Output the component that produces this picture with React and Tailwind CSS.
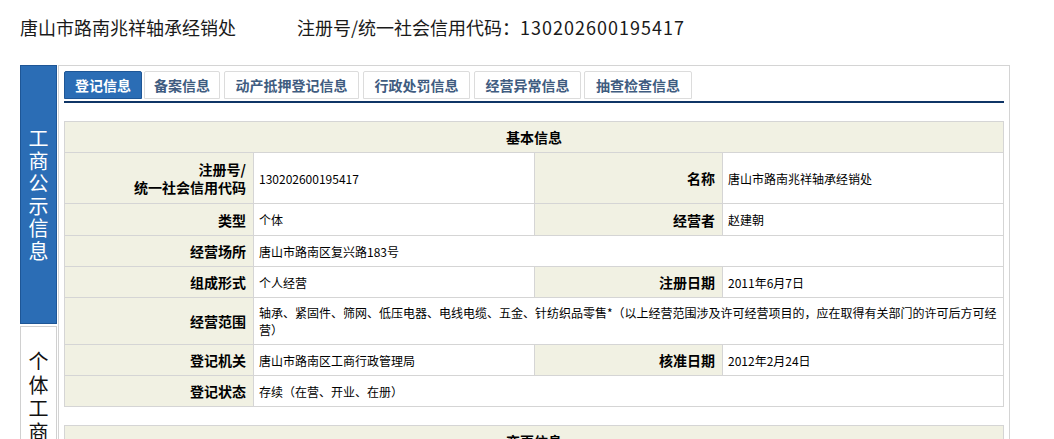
import React from 'react';

const FONT = { fontFamily: '"Noto Sans CJK SC", "Noto Sans", sans-serif' };

// largeur et marge de chaque onglet, relevées sur la capture
const tabs = [
    { label: '登记信息', cls: 'w-[78px]' },
    { label: '备案信息', cls: 'ml-[2px] w-[76px]' },
    { label: '动产抵押登记信息', cls: 'ml-[4px] w-[135px]' },
    { label: '行政处罚信息', cls: 'ml-[4px] w-[107px]' },
    { label: '经营异常信息', cls: 'ml-[4px] w-[107px]' },
    { label: '抽查检查信息', cls: 'ml-[3px] w-[108px]' },
];

function Label({ children }) {
    return (
        <td className="border border-[#d5d5d5] bg-[#f1f1e3] text-right pr-[7px] text-[14px] font-bold text-black leading-[18px]">
            {children}
        </td>
    );
}

function Value({ children, colSpan }) {
    return (
        <td colSpan={colSpan} className="border border-[#d5d5d5] bg-white pl-[5px] pr-[4px] text-[12px] text-black leading-[17px]">
            {children}
        </td>
    );
}

export default function App() {
    return (
        <div className="bg-white min-h-screen text-black" style={FONT}>
            {/* Header */}
            <div className="h-[54px] flex items-center pl-[20px] text-[18px] text-[#1a1a1a]">
                <span>唐山市路南兆祥轴承经销处</span>
                <span className="ml-[61px]">
                    注册号/统一社会信用代码：<span className="tracking-[1px]">130202600195417</span>
                </span>
            </div>

            <div className="flex mt-[11px] pl-[20px]">
                {/* Left sidebar */}
                <div className="w-[37px] flex flex-col shrink-0">
                    <div className="h-[259px] bg-[#2b6db5] border border-[#1e5696] flex items-center justify-center">
                        <div className="w-[20px] text-white text-[20px] leading-[22.5px] text-center">工商公示信息</div>
                    </div>
                    <div className="mt-[2px] h-[252px] bg-white border border-[#d0d0d0] flex justify-center pt-[22px]">
                        <div className="w-[20px] text-[#111] text-[20px] leading-[23.5px] text-center">个体工商户公示信息</div>
                    </div>
                </div>

                {/* Main panel */}
                <div className="ml-[1px] w-[952px] border border-[#d4d4d4] p-[5px]">
                    <div className="flex">
                        {tabs.map((t, i) => (
                            <div
                                key={t.label}
                                className={
                                    (i === 0
                                        ? 'text-white bg-[#2b6db5] border-[#1e5696] '
                                        : 'text-[#3f5c80] bg-white border-[#dcdcdc] ') +
                                    'h-[28px] flex items-center justify-center text-[14px] font-bold border rounded-t-[2px] ' +
                                    t.cls
                                }
                            >
                                {t.label}
                            </div>
                        ))}
                    </div>
                    <div className="mt-[2px] h-[2px] bg-[#0f3566]" />

                    <table className="mt-[18px] w-full table-fixed border-collapse">
                        <colgroup>
                            <col className="w-[189px]" />
                            <col className="w-[281px]" />
                            <col className="w-[188px]" />
                            <col />
                        </colgroup>
                        <tbody>
                            <tr className="h-[31px]">
                                <td colSpan={4} className="border border-[#d5d5d5] bg-[#f1f1e3] text-center text-[14px] font-bold">
                                    基本信息
                                </td>
                            </tr>
                            <tr className="h-[51px]">
                                <Label>
                                    注册号/
                                    <br />
                                    统一社会信用代码
                                </Label>
                                <Value>130202600195417</Value>
                                <Label>名称</Label>
                                <Value>唐山市路南兆祥轴承经销处</Value>
                            </tr>
                            <tr className="h-[32px]">
                                <Label>类型</Label>
                                <Value>个体</Value>
                                <Label>经营者</Label>
                                <Value>赵建朝</Value>
                            </tr>
                            <tr className="h-[31px]">
                                <Label>经营场所</Label>
                                <Value colSpan={3}>唐山市路南区复兴路183号</Value>
                            </tr>
                            <tr className="h-[31px]">
                                <Label>组成形式</Label>
                                <Value>个人经营</Value>
                                <Label>注册日期</Label>
                                <Value>2011年6月7日</Value>
                            </tr>
                            <tr className="h-[47px]">
                                <Label>经营范围</Label>
                                <Value colSpan={3}>
                                    轴承、紧固件、筛网、低压电器、电线电缆、五金、针纺织品零售*（以上经营范围涉及许可经营项目的，应在取得有关部门的许可后方可经营）
                                </Value>
                            </tr>
                            <tr className="h-[31px]">
                                <Label>登记机关</Label>
                                <Value>唐山市路南区工商行政管理局</Value>
                                <Label>核准日期</Label>
                                <Value>2012年2月24日</Value>
                            </tr>
                            <tr className="h-[31px]">
                                <Label>登记状态</Label>
                                <Value colSpan={3}>存续（在营、开业、在册）</Value>
                            </tr>
                        </tbody>
                    </table>

                    <table className="mt-[18px] w-full table-fixed border-collapse">
                        <tbody>
                            <tr className="h-[31px]">
                                <td className="border border-[#d5d5d5] bg-[#f1f1e3] text-center text-[14px] font-bold">
                                    变更信息
                                </td>
                            </tr>
                            <tr className="h-[31px]">
                                <td className="border border-[#d5d5d5] bg-white" />
                            </tr>
                        </tbody>
                    </table>
                </div>
            </div>
        </div>
    );
}
